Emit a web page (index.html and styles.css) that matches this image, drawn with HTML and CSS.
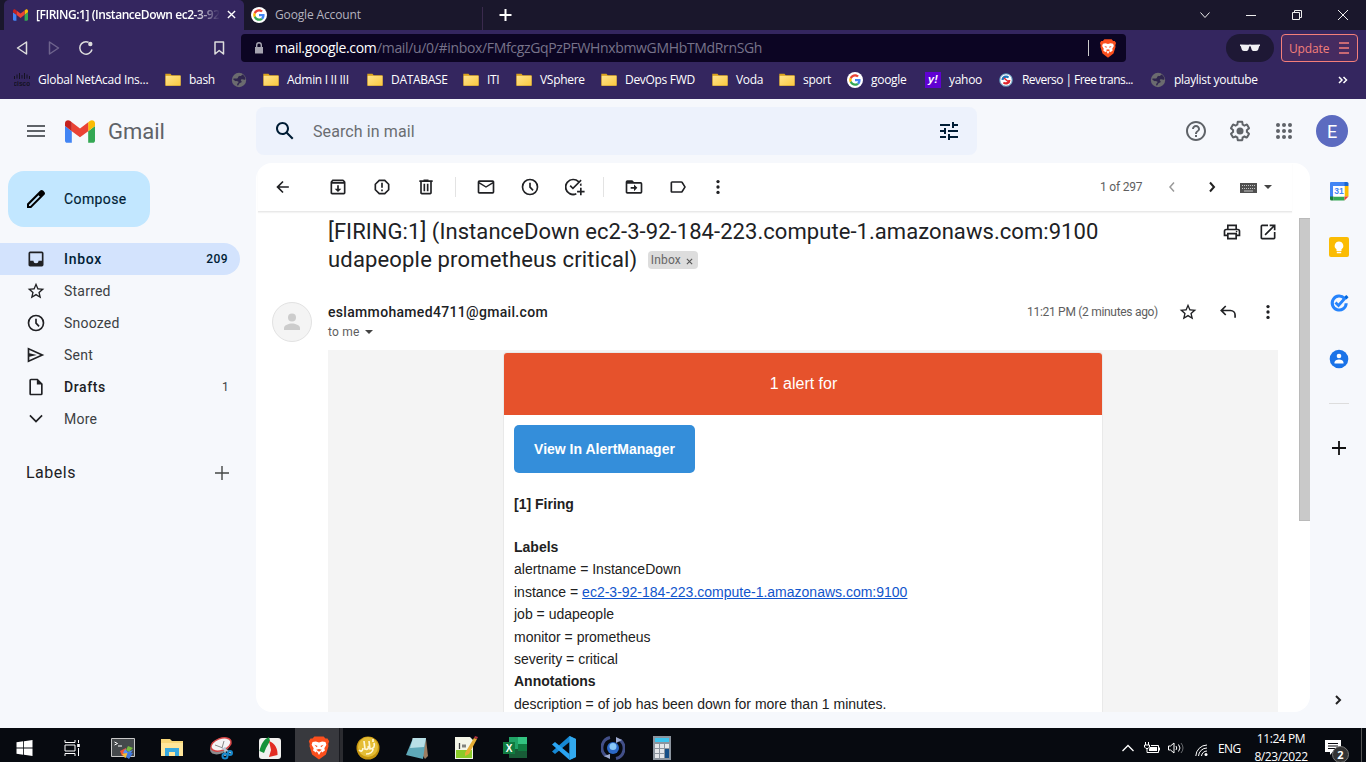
FILE: index.html
```html
<!DOCTYPE html>
<html lang="en">
<head>
<meta charset="utf-8">
<title>Gmail</title>
<link rel="stylesheet" href="styles.css">
</head>
<body>
<svg class="sprite" aria-hidden="true">
  <symbol id="gmail" viewBox="52 42 88 66"><path fill="#4285f4" d="M58 108h14V74L52 59v43c0 3.320 2.690 6 6 6"/><path fill="#34a853" d="M120 108h14c3.320 0 6-2.690 6-6V59l-20 15"/><path fill="#fbbc04" d="M120 48v26l20-15v-8c0-7.420-8.470-11.650-14.400-7.200"/><path fill="#ea4335" d="M72 74V48l24 18 24-18v26L96 92"/><path fill="#c5221f" d="M52 51v8l20 15V48l-5.600-4.200c-5.940-4.450-14.400-.22-14.400 7.200"/></symbol>
  <symbol id="google" viewBox="-9 -9 66 66"><circle cx="24" cy="24" r="33" fill="#fff"/><path fill="#ea4335" d="M24 9.5c3.54 0 6.71 1.22 9.21 3.6l6.85-6.85C35.9 2.38 30.47 0 24 0 14.62 0 6.51 5.38 2.56 13.22l7.98 6.19C12.43 13.72 17.74 9.5 24 9.5z"/><path fill="#4285f4" d="M46.98 24.55c0-1.57-.15-3.09-.38-4.55H24v9.02h12.94c-.58 2.96-2.26 5.48-4.78 7.18l7.73 6c4.51-4.18 7.09-10.36 7.09-17.65z"/><path fill="#fbbc05" d="M10.53 28.59c-.48-1.45-.76-2.99-.76-4.59s.27-3.14.76-4.59l-7.98-6.19C.92 16.46 0 20.12 0 24c0 3.88.92 7.54 2.56 10.78l7.97-6.19z"/><path fill="#34a853" d="M24 48c6.48 0 11.93-2.13 15.89-5.81l-7.73-6c-2.15 1.45-4.92 2.3-8.16 2.3-6.26 0-11.57-4.22-13.47-9.91l-7.98 6.19C6.51 42.62 14.62 48 24 48z"/></symbol>
  <linearGradient id="fg" x2="1" y2="1"><stop offset="0" stop-color="#ffe38c"/><stop offset="1" stop-color="#fbc93f"/></linearGradient>
  <symbol id="folder" viewBox="0 0 16 16"><path d="M.3 1.800h5.200l1.200 1.400h8.800v10.600H.3z" fill="#d9a21c"/><path d="M.7 3.800h14.900v9.800H.7z" fill="url(#fg)"/></symbol>
  <symbol id="globe" viewBox="0 0 16 16"><circle cx="8" cy="8" r="7.200" fill="#6b6b6f"/><path d="M1.800 7C4 6 5.200 6.800 6.500 6.300c.8-.5.300-1.500 1.300-2 1.200-.5 1.700.2 2.700-.8L11.500 2.500C13.500 3.500 14.500 5.500 14.400 7.500c-1.400.9-2.400-.6-4.200 0-.9.5-.2 1.200.3 1.700.6.8-.2 1.300-1 1.600-1.200.4-1.500 1.200-2 2.200-.7 1-1.500.6-1.400-.4.1-1.400 1.600-1.700 1.500-2.600-.2-1-2.200-.6-3.400-1.100C3.200 8.500 2.800 7.600 1.800 7z" fill="#30264f"/></symbol>
  <symbol id="brave" viewBox="0 0 24 26"><path d="M7 .5h10l2 2.300 2.200-.2 1.800 3-1 3 .3 2.400-2.800 9L12 25.500 4.500 20l-2.800-9L2 8.600l-1-3 1.800-3 2.200.2z" fill="#fb4f1d"/><path d="M5 6.500l3.500-.6L12 7l3.500-1.100 3.500.6 1 3-2.200 3.800.6 2.400-3 2.300-1-1.500L12 20.500l-2.400-4-1 1.500-3-2.300.6-2.400L4 9.500z" fill="#fff"/><path d="M7 9.500l3.500 1.200-1 1.600zM17 9.500l-3.500 1.200 1 1.600zM9 15l3-1 3 1-3 2z" fill="#fb4f1d"/></symbol>
  <symbol id="star" viewBox="0 0 24 24"><path d="M22 9.240l-7.190-.62L12 2 9.190 8.630 2 9.240l5.460 4.730L5.820 21 12 17.270 18.180 21l-1.630-7.030L22 9.240zM12 15.400l-3.760 2.270 1-4.280-3.320-2.880 4.380-.38L12 6.100l1.710 4.040 4.380.38-3.320 2.880 1 4.280L12 15.400z"/></symbol>
  <symbol id="clock" viewBox="0 0 24 24"><path d="M12 2a10 10 0 1 0 0 20 10 10 0 0 0 0-20zm0 18a8 8 0 1 1 0-16 8 8 0 0 1 0 16zM13 7h-2v5.500l4 4.200 1.400-1.300-3.400-3.700z"/></symbol>
  <symbol id="dots" viewBox="0 0 24 24"><circle cx="12" cy="5.500" r="2"/><circle cx="12" cy="12" r="2"/><circle cx="12" cy="18.500" r="2"/></symbol>
</svg>

<header class="browser">
  <div class="tabs">
    <div class="tab active"><svg class="i14"><use href="#gmail"/></svg><span class="tab-title">[FIRING:1] (InstanceDown ec2-3-92</span><svg class="close" viewBox="0 0 10 10"><path d="M1 1l8 8M9 1L1 9"/></svg></div>
    <div class="tab"><svg class="i16"><use href="#google"/></svg><span>Google Account</span></div>
    <svg class="newtab" viewBox="0 0 12 12"><path d="M6 0v12M0 6h12"/></svg>
    <div class="win">
      <svg viewBox="0 0 12 12"><path d="M1.500 3.500L6 8.500l4.500-5"/></svg>
      <svg viewBox="0 0 12 12"><path d="M1 6.500h10"/></svg>
      <svg viewBox="0 0 12 12"><path d="M1.500 3.500h7v7h-7zM3.500 3.500v-2h7v7h-2"/></svg>
      <svg viewBox="0 0 12 12"><path d="M1 1l10 10M11 1L1 11"/></svg>
    </div>
  </div>
  <div class="toolbar">
    <svg class="tb" viewBox="0 0 16 16"><path d="M12.500 2v12l-9-6z"/></svg>
    <svg class="tb dim" viewBox="0 0 16 16"><path d="M3.500 2v12l9-6z"/></svg>
    <svg class="tb reload" viewBox="0 0 16 16"><path d="M14 9.500A6.200 6.200 0 1 1 10.500 2.300"/><circle cx="12.300" cy="4" r="2.200" fill="#ddd" stroke="none"/></svg>
    <svg class="tb mark" viewBox="0 0 16 16"><path d="M4 2h8.500v12L8.200 10.500 4 14z"/></svg>
    <div class="url">
      <svg class="lock" viewBox="0 0 10 12"><path d="M1 5h8v6.500H1z" fill="#a6a4b0"/><path d="M2.700 5V3a2.300 2.300 0 0 1 4.600 0v2" fill="none" stroke="#a6a4b0" stroke-width="1.400"/></svg>
      <span class="host">mail.google.com</span><span class="path">/mail/u/0/#inbox/FMfcgzGqPzPFWHnxbmwGMHbTMdRrnSGh</span>
      <i class="rule"></i><svg class="lion"><use href="#brave"/></svg>
    </div>
    <div class="private"><svg viewBox="0 0 22 10"><path d="M1 1.500l8.500.3c1-.4 2-.4 3 0L21 1.500v1.300l-.8.500-.9 3c-.4 1.200-1 1.700-2.200 1.700h-2.300c-1.200 0-1.900-.6-2.300-1.800l-.7-2.400c-.3-.6-1.300-.6-1.600 0l-.7 2.400C9.100 7.400 8.400 8 7.200 8H4.900C3.700 8 3.100 7.500 2.700 6.300l-.9-3L1 2.800z" fill="#f1f0f4"/></svg></div>
    <div class="update"><span>Update</span><svg viewBox="0 0 10 12"><path d="M0 1h10M0 6h10M0 11h10" stroke="#f47f7a" stroke-width="1.500"/></svg></div>
  </div>
  <nav class="bookmarks">
    <span class="bm"><svg class="i16" viewBox="0 0 16 16"><path d="M.5 4v3M3 2.500v4M5.500 1v6M8 3v3.500M10.500 1v6M13 2.500v4M15.500 4v3" stroke="#151222"/><text x="-.5" y="13.500" class="cisco">cisco</text></svg><b class="w-net">Global NetAcad Ins...</b></span>
    <span class="bm"><svg class="i16"><use href="#folder"/></svg><b>bash</b></span>
    <span class="bm"><svg class="i16"><use href="#globe"/></svg></span>
    <span class="bm"><svg class="i16"><use href="#folder"/></svg><b>Admin I II III</b></span>
    <span class="bm"><svg class="i16"><use href="#folder"/></svg><b>DATABASE</b></span>
    <span class="bm"><svg class="i16"><use href="#folder"/></svg><b>ITI</b></span>
    <span class="bm"><svg class="i16"><use href="#folder"/></svg><b>VSphere</b></span>
    <span class="bm"><svg class="i16"><use href="#folder"/></svg><b>DevOps FWD</b></span>
    <span class="bm"><svg class="i16"><use href="#folder"/></svg><b>Voda</b></span>
    <span class="bm"><svg class="i16"><use href="#folder"/></svg><b>sport</b></span>
    <span class="bm"><svg class="i16"><use href="#google"/></svg><b>google</b></span>
    <span class="bm"><i class="yahoo">y!</i><b>yahoo</b></span>
    <span class="bm"><svg class="i16" viewBox="0 0 16 16"><circle cx="7" cy="8" r="6.600" fill="#fff"/><path d="M2.500 8a4.500 4.500 0 0 1 7.700-3.200L9 6.200A2.800 2.800 0 0 0 4.600 8z" fill="#1b75bb"/><path d="M11.500 8a4.500 4.500 0 0 1-7.700 3.200L5 9.800A2.800 2.800 0 0 0 9.400 8z" fill="#e0262d"/><path d="M5 6l4 3.500" stroke="#e0262d" stroke-width="1.500"/><circle cx="7" cy="8" r="6.300" fill="none" stroke="#2a6f9f" stroke-width=".9"/></svg><b class="w-rev">Reverso | Free trans...</b></span>
    <span class="bm"><svg class="i16"><use href="#globe"/></svg><b>playlist youtube</b></span>
    <svg class="more" viewBox="0 0 10 8"><path d="M1 1l3 3-3 3M5.500 1l3 3-3 3"/></svg>
  </nav>
</header>

<div class="app">
  <header class="top">
    <svg class="menu" viewBox="3 6 18 12"><path d="M3 18h18v-2H3v2zm0-5h18v-2H3v2zm0-7v2h18V6H3z"/></svg>
    <svg class="logo"><use href="#gmail"/></svg>
    <span class="brand">Gmail</span>
    <div class="search">
      <svg class="i24" viewBox="0 0 24 24"><path d="M20.490 19l-5.730-5.730C15.530 12.200 16 10.910 16 9.500 16 5.910 13.090 3 9.500 3S3 5.910 3 9.500 5.910 16 9.500 16c1.410 0 2.700-.47 3.770-1.240L19 20.490 20.490 19zM5 9.500C5 7.010 7.010 5 9.500 5S14 7.010 14 9.500 11.990 14 9.500 14 5 11.990 5 9.500z"/></svg>
      <span>Search in mail</span>
      <svg class="i24" viewBox="0 0 24 24"><path d="M3 17v2h6v-2H3zM3 5v2h10V5H3zm10 16v-2h8v-2h-8v-2h-2v6h2zM7 9v2H3v2h4v2h2V9H7zm14 4v-2H11v2h10zm-6-4h2V7h4V5h-4V3h-2v6z"/></svg>
    </div>
    <div class="tools">
      <svg class="i24" viewBox="0 0 24 24"><path d="M11 18h2v-2h-2v2zm1-16C6.480 2 2 6.480 2 12s4.480 10 10 10 10-4.480 10-10S17.520 2 12 2zm0 18c-4.410 0-8-3.590-8-8s3.590-8 8-8 8 3.590 8 8-3.590 8-8 8zm0-14c-2.210 0-4 1.790-4 4h2c0-1.100.9-2 2-2s2 .9 2 2c0 2-3 1.750-3 5h2c0-2.250 3-2.500 3-5 0-2.210-1.790-4-4-4z"/></svg>
      <svg class="i24" viewBox="0 0 24 24"><path d="M13.850 22.250h-3.700c-.74 0-1.360-.54-1.450-1.270l-.27-1.890c-.27-.14-.53-.29-.79-.46l-1.800.72c-.7.26-1.470-.03-1.810-.65L2.200 15.530c-.35-.66-.2-1.440.36-1.880l1.530-1.190c-.01-.15-.02-.3-.02-.46 0-.15.010-.31.020-.46l-1.520-1.190c-.59-.45-.74-1.260-.37-1.880l1.850-3.190c.34-.62 1.110-.9 1.790-.63l1.810.73c.26-.17.520-.32.780-.46l.27-1.910c.09-.7.710-1.250 1.440-1.250h3.700c.74 0 1.360.54 1.450 1.270l.27 1.890c.27.14.53.29.79.46l1.800-.72c.71-.26 1.480.03 1.820.65l1.840 3.180c.36.66.2 1.440-.36 1.880l-1.520 1.190c.01.15.02.3.02.46s-.01.31-.02.46l1.520 1.190c.56.45.72 1.230.37 1.860l-1.860 3.220c-.34.62-1.110.9-1.800.63l-1.800-.72c-.26.17-.52.32-.78.46l-.27 1.910c-.1.68-.72 1.220-1.460 1.220zm-3.230-2h2.760l.37-2.550.53-.22c.44-.18.88-.44 1.340-.78l.45-.34 2.380.96 1.380-2.400-2.030-1.580.07-.56c.03-.26.06-.51.06-.78s-.03-.53-.06-.78l-.07-.56 2.030-1.580-1.390-2.400-2.390.96-.45-.35c-.42-.32-.87-.58-1.330-.77l-.52-.22-.37-2.550h-2.760l-.37 2.550-.53.21c-.44.19-.88.44-1.340.79l-.45.33-2.380-.95-1.390 2.390 2.030 1.580-.07.56a7 7 0 0 0-.06.79c0 .26.02.53.06.78l.07.56-2.030 1.580 1.380 2.400 2.390-.96.45.35c.43.33.86.58 1.330.77l.53.22z"/><circle cx="12" cy="12" r="3.500"/></svg>
      <svg class="i24" viewBox="0 0 24 24"><g id="r"><circle cx="6" cy="6" r="2"/><circle cx="12" cy="6" r="2"/><circle cx="18" cy="6" r="2"/></g><use href="#r" y="6"/><use href="#r" y="12"/></svg>
      <span class="me">E</span>
    </div>
  </header>

  <aside class="side">
    <div class="compose"><svg class="i24" viewBox="0 0 24 24"><path d="M20.410 4.940l-1.350-1.350c-.78-.78-2.050-.78-2.830 0L3 16.820V21h4.180L20.410 7.770c.79-.78.79-2.050 0-2.830zM6.350 19H5v-1.350l9.500-9.500 1.350 1.350z"/></svg><span>Compose</span></div>
    <ul class="nav">
      <li class="on"><svg viewBox="0 0 24 24"><path d="M19 3H5a2 2 0 0 0-2 2v14c0 1.100.9 2 2 2h14a2 2 0 0 0 2-2V5a2 2 0 0 0-2-2zm0 11h-4a3 3 0 0 1-6 0H5V5h14z"/></svg><span>Inbox</span><em>209</em></li>
      <li><svg><use href="#star"/></svg><span>Starred</span></li>
      <li><svg><use href="#clock"/></svg><span>Snoozed</span></li>
      <li><svg viewBox="0 0 24 24"><path d="M2 3v18l20-9L2 3zm2 11l9-2-9-2V6.090L17.130 12 4 17.910V14z"/></svg><span>Sent</span></li>
      <li class="bold"><svg viewBox="0 0 24 24"><path d="M14 2H6a2 2 0 0 0-2 2v16c0 1.100.9 2 2 2h12a2 2 0 0 0 2-2V8l-6-6zM6 20V4h7v5h5v11H6z"/></svg><span>Drafts</span><em>1</em></li>
      <li><svg viewBox="0 0 24 24"><path d="M12 16.400l-8-8L5.400 7l6.600 6.600L18.600 7 20 8.400z"/></svg><span>More</span></li>
    </ul>
    <div class="labels"><span>Labels</span><svg viewBox="0 0 14 14"><path d="M7 0v14M0 7h14" stroke="#444746" stroke-width="1.400"/></svg></div>
  </aside>

  <main class="mail">
    <div class="actions">
      <span class="btn back"><svg viewBox="0 0 24 24"><path d="M19 11H7.800l4.900-4.900L11.300 4.700 4 12l7.300 7.300 1.400-1.400L7.800 13H19z"/></svg></span>
      <span class="btn"><svg viewBox="0 0 24 24"><path d="M20.500 5.200l-1.400-1.700A1.500 1.500 0 0 0 18 3H6c-.5 0-.9.200-1.200.600L3.500 5.200C3.200 5.600 3 6 3 6.500V19c0 1.100.9 2 2 2h14a2 2 0 0 0 2-2V6.500c0-.5-.2-.9-.5-1.300zM6.200 5h11.600l.8 1H5.400zM5 19V8h14v11zm8-9h-2v4H8l4 4 4-4h-3z"/></svg></span>
      <span class="btn"><svg viewBox="0 0 24 24"><path d="M15.700 3H8.300L3 8.300v7.400L8.300 21h7.400l5.300-5.300V8.300zM19 14.900L14.900 19H9.100L5 14.900V9.100L9.100 5h5.800L19 9.100zM11 7h2v6h-2zM11 15h2v2h-2z"/></svg></span>
      <span class="btn"><svg viewBox="0 0 24 24"><path d="M15 4V3H9v1H4v2h1v13c0 1.100.9 2 2 2h10a2 2 0 0 0 2-2V6h1V4zm2 15H7V6h10zM9 8h2v9H9zm4 0h2v9h-2z"/></svg></span>
      <i class="sep"></i>
      <span class="btn"><svg viewBox="0 0 24 24"><path d="M22 6c0-1.100-.9-2-2-2H4a2 2 0 0 0-2 2v12c0 1.100.9 2 2 2h16a2 2 0 0 0 2-2zm-2 0l-8 5-8-5zm0 12H4V8l8 5 8-5z"/></svg></span>
      <span class="btn"><svg><use href="#clock"/></svg></span>
      <span class="btn task"><svg viewBox="0 0 24 24"><path d="M10 2a10 10 0 1 0 4 19l-.8-1.800A8 8 0 1 1 15.500 6.200L9.500 12.200 6.900 9.600 5.500 11l4 4L20 4.500l-1.400-1.400-1.700 1.700A10 10 0 0 0 10 2zM20 10.500a10 10 0 0 0-.6-3.200l-1.600 1.600c.1.500.2 1.100.2 1.600zM18 13h2v3.500h3.500v2H20V22h-2v-3.500h-3.500v-2H18z"/></svg></span>
      <i class="sep"></i>
      <span class="btn"><svg viewBox="0 0 24 24"><path d="M20 6h-8l-2-2H4a2 2 0 0 0-2 2v12c0 1.100.9 2 2 2h16a2 2 0 0 0 2-2V8a2 2 0 0 0-2-2zm0 12H4V8h16zm-8-1l4-4-4-4v3H8v2h4z"/></svg></span>
      <span class="btn"><svg viewBox="0 0 24 24"><path d="M17.600 5.800C17.300 5.300 16.700 5 16 5H5a2 2 0 0 0-2 2v10c0 1.100.9 2 2 2h11c.7 0 1.300-.3 1.600-.8L21.500 12zM16 17H5V7h11l3.300 5z"/></svg></span>
      <span class="btn last"><svg><use href="#dots"/></svg></span>
      <span class="count">1 of 297</span>
      <svg class="prev" viewBox="0 0 8 12"><path d="M6 1.500L2 6l4 4.500"/></svg>
      <svg class="next" viewBox="0 0 8 12"><path d="M2 1.500L6 6l-4 4.500"/></svg>
      <svg class="kbd" viewBox="0 0 17 11"><path d="M0 0h17v10H0z" fill="#505050"/><path d="M2 2.500h13M2 5.500h13" stroke="#c4c4c4" stroke-dasharray="1 1"/><path d="M4 8h9" stroke="#c4c4c4"/></svg>
      <i class="caret"></i>
    </div>
    <div class="view">
      <div class="subject">
        <h1><span class="l1">[FIRING:1] (InstanceDown ec2-3-92-184-223.compute-1.amazonaws.com:9100</span><br><span class="l2">udapeople prometheus critical)</span> <span class="chip">Inbox <svg viewBox="0 0 8 8"><path d="M1 1l6 6M7 1L1 7"/></svg></span></h1>
        <svg viewBox="0 0 24 24"><path d="M19 8h-1V3H6v5H5a3 3 0 0 0-3 3v6h4v4h12v-4h4v-6a3 3 0 0 0-3-3zM8 5h8v3H8zm8 14H8v-4h8zm4-4h-2v-2H6v2H4v-4c0-.6.4-1 1-1h14c.6 0 1 .4 1 1z"/><circle cx="17.500" cy="11.500" r="1"/></svg>
        <svg viewBox="0 0 24 24"><path d="M19 19H5V5h7V3H5a2 2 0 0 0-2 2v14c0 1.100.9 2 2 2h14a2 2 0 0 0 2-2v-7h-2zM14 3v2h3.600l-9.800 9.800 1.400 1.400L19 6.400V10h2V3z"/></svg>
      </div>
      <div class="from">
        <span class="avatar"><svg viewBox="0 0 18 18"><circle cx="9" cy="4.500" r="4"/><path d="M1 17v-2c0-3 5-4.500 8-4.500s8 1.500 8 4.500v2z"/></svg></span>
        <div class="who"><strong>eslammohamed4711@gmail.com</strong><span>to me <i class="caret"></i></span></div>
        <div class="meta"><span>11:21 PM (2 minutes ago)</span><svg><use href="#star"/></svg><svg viewBox="0 0 24 24"><path d="M10 5.500L8.600 4.100 2.500 10.200l6.100 6.100L10 14.900 6.300 11.200H15a4.500 4.500 0 0 1 4.500 4.500V19h2v-3.300A6.500 6.500 0 0 0 15 9.200H6.300z"/></svg><svg><use href="#dots"/></svg></div>
      </div>
      <div class="body">
        <div class="card">
          <div class="alert">1 alert for</div>
          <div class="inner">
            <span class="cta">View In AlertManager</span>
            <p class="fire"><b>[1] Firing</b></p>
            <p class="facts"><b>Labels</b><br>alertname = InstanceDown<br>instance = <u>ec2-3-92-184-223.compute-1.amazonaws.com:9100</u><br>job = udapeople<br>monitor = prometheus<br>severity = critical<br><b>Annotations</b><br>description = of job has been down for more than 1 minutes.</p>
          </div>
        </div>
      </div>
      <i class="thumb"></i>
    </div>
  </main>

  <aside class="addons">
    <svg viewBox="0 0 20 20"><path d="M2 1h14v4H4v11H1V2a1 1 0 0 1 1-1z" fill="#4285f4"/><path d="M15.500 1H18a1.500 1.500 0 0 1 1.500 1.500V5h-4z" fill="#1967d2"/><path d="M15.500 5h4v10.500h-4z" fill="#fbbc04"/><path d="M4.500 15.500h11v4h-11z" fill="#34a853"/><path d="M1 15.500h3.500v4h-2A1.500 1.500 0 0 1 1 18z" fill="#188038"/><path d="M15.500 15.500h4l-4 4z" fill="#ea4335"/><path d="M4.500 5h11v10.500h-11z" fill="#fff"/><text x="10" y="13.300" class="day">31</text></svg>
    <svg viewBox="0 0 20 20"><rect width="20" height="20" rx="2" fill="#fbbc04"/><path d="M10 4.500a4.300 4.300 0 0 0-2.500 7.800V14h5v-1.700A4.300 4.300 0 0 0 10 4.500zM7.800 14.700h4.400v1.500H7.800z" fill="#fff"/></svg>
    <svg viewBox="0 0 20 20"><path d="M15.500 5.500a7 7 0 1 0 1.700 4.700" fill="none" stroke="#2684fc" stroke-width="3"/><path d="M6.500 9.500l3 3 8-9" fill="none" stroke="#2684fc" stroke-width="2.800"/><path d="M15.500 4l2-2 2 2.200-2 2.300z" fill="#0066da"/></svg>
    <svg viewBox="0 0 20 20"><circle cx="10" cy="10" r="9.300" fill="#1a73e8"/><circle cx="10" cy="7" r="2.300" fill="#fff"/><path d="M5.500 14.500v-1c0-4 9-4 9 0v1z" fill="#fff"/></svg>
    <i class="line"></i>
    <svg class="plus" viewBox="0 0 14 14"><path d="M7 0v14M0 7h14" stroke="#111" stroke-width="1.800"/></svg>
    <svg class="expand" viewBox="0 0 8 12"><path d="M2 2l4 4-4 4"/></svg>
  </aside>
</div>

<footer class="taskbar">
  <span><svg class="t16" viewBox="0 0 16 16"><path d="M0 2.300l6.700-1v6.300H0zM7.500 1.200L16 0v7.600H7.500zM0 8.400h6.700v6.300l-6.700-1zM7.500 8.400H16V16l-8.500-1.200z" fill="#fff"/></svg></span>
  <span><svg class="t16" viewBox="0 0 16 16"><path d="M.5 0v2.500h10V0M.5 16v-2.500h10V16M.5 5h10v6H.5zM14 0v3M14 8v8" fill="none" stroke="#fff"/><path d="M12.700 4h2.600v3h-2.600z" fill="#fff"/></svg></span>
  <span><svg viewBox="0 0 24 24"><path d="M.5 2.500h23v18H.5z" fill="#45494c" stroke="#c8c8c8"/><path d="M3.500 6l3 1.500-3 1.500M7 10h4" fill="none" stroke="#fff"/><path d="M9 15l6-3v5l-4 3z" fill="#ef5534"/><path d="M17 10l5 2-4 4-3-2z" fill="#76b83f"/><path d="M14 13l3 3 5-2-4 5-6-2z" fill="#5791f4"/><path d="M11 18l5-1 2 3-4 2z" fill="#f7bd37"/><path d="M17 16l5 1-4 6-3-2z" fill="#3e77de"/></svg></span>
  <span><svg viewBox="0 0 24 24"><path d="M1 3h9l2 2h11v15H1z" fill="#f8d778"/><path d="M1 7h22v13H1z" fill="#ffe69a"/><path d="M5 12h14v8h-4v-4H9v4H5z" fill="#37a9e0"/></svg></span>
  <span><svg viewBox="0 0 24 24"><ellipse cx="11" cy="11" rx="10.500" ry="6.500" fill="#8c8c8f" transform="rotate(-25 11 11)"/><ellipse cx="12" cy="8.500" rx="10.500" ry="6" fill="#f4f4f5" stroke="#d64545" stroke-width="1.500" transform="rotate(-20 12 8.500)"/><path d="M15 5l-2 7M6 9l8 3" stroke="#888"/><path d="M13 12l9 5M16 11v9" stroke="#b8c8d5" stroke-width="1.500"/><circle cx="16" cy="20" r="2.500" fill="none" stroke="#1688cc" stroke-width="2"/><circle cx="21" cy="17" r="2" fill="none" stroke="#1688cc" stroke-width="2"/></svg></span>
  <span><svg viewBox="0 0 24 24"><rect x="1" y="2" width="22" height="21" rx="3" fill="#f1f1ef"/><path d="M1.500 15C3 8 6 3 11 1l1 4-4 7-2 5z" fill="#17923a"/><path d="M11 5c6 2 9 8 8.500 14L11 21l2-7z" fill="#e22c22"/></svg></span>
  <span class="run"><svg viewBox="0 0 24 24"><use href="#brave" width="24" height="24"/></svg></span>
  <span><svg viewBox="0 0 24 24"><circle cx="12" cy="12" r="11.500" fill="#c7960f"/><circle cx="12" cy="11" r="10" fill="#e5bd35"/><path d="M3 14c2 2 4 1 4-2M8 5l1 8c3 1 4-1 3-3M13 5l1 8c4 0 5-3 4-6M10 18c4 0 7-2 7-5M17 3v3" fill="none" stroke="#fff7d5" stroke-width="1.700"/></svg></span>
  <span><svg viewBox="0 0 24 24"><path d="M7 2l14 1 2 17-3 3z" fill="#9c7c60"/><path d="M8 2h13l-3 21-17-4z" fill="#5fa9b9"/><path d="M8 2h13l-2 9-14 1z" fill="#b9e0e7"/></svg></span>
  <span><svg viewBox="0 0 24 24"><path d="M1 1h15l3 3v19H1z" fill="#f4f6e8"/><path d="M2 14h16v8H2z" fill="#8acb28"/><path d="M5.500 7v6M9 8.500v3M11 8.500v3" stroke="#444" stroke-width="1.300"/><path d="M11 17L20 2l3 1-8 15-4 2z" fill="#e6ad34"/><path d="M20 2l1-2 3 1-1 2z" fill="#af3541"/></svg></span>
  <span><svg viewBox="0 0 24 24"><path d="M6 1h18v21H6z" fill="#21a366"/><path d="M15 1h9v7h-9z" fill="#33c481"/><path d="M6 13h18v9H6z" fill="#185c37"/><path d="M15 8h9v7h-9z" fill="#107c41"/><path d="M0 6h12v12H0z" fill="#107c41"/><text x="6" y="15.500" class="xl">X</text></svg></span>
  <span><svg viewBox="0 0 24 24"><path d="M17.500 0L24 3v18l-6.500 3V6L3 18l-3-2.500z" fill="#1688d4"/><path d="M0 8.500L3 6l14.500 12v6z" fill="#2aa4f2"/><path d="M17.500 0L24 3v18l-6.500 3z" fill="#32a9ee"/></svg></span>
  <span><svg viewBox="0 0 24 24"><circle cx="12" cy="12" r="6" fill="#2b68c6"/><circle cx="12" cy="10.500" r="3.500" fill="#88c8f7"/><path d="M9 1.500A10.500 10.500 0 0 0 5 20M15 22.500A10.500 10.500 0 0 0 19 4" fill="none" stroke="#424f88" stroke-width="3"/><path d="M3 20l6-2v5zM21 4l-6-3v6z" fill="#9eabd0"/></svg></span>
  <span><svg viewBox="0 0 24 24"><path d="M3 0h18v24H3z" fill="#8b949e"/><path d="M5 2h14v4H5z" fill="#3cc4ef"/><path d="M5 8h4v4H5zm5 0h4v4h-4zm5 0h4v4h-4zM5 13h4v4H5zm5 0h4v4h-4zM5 18h4v4H5zm5 0h4v4h-4z" fill="#e4e7ea"/><path d="M15 13h4v9h-4z" fill="#174f86"/></svg></span>
  <div class="tray">
    <svg class="up" viewBox="0 0 12 8"><path d="M.5 7L6 1.500 11.500 7"/></svg>
    <svg class="bat" viewBox="0 0 16 12"><path d="M1.500 0v3M4.500 0v3M.5 3h5v2l-1.500 1.500H2L.5 5zM3 6.500v4h11.500v-7H7"/><path d="M6 5h7v4H5V7z" fill="#fff" stroke="none"/><path d="M15.500 5.500v3"/></svg>
    <svg class="vol" viewBox="0 0 16 12"><path d="M.5 4h2L6 1v10L2.500 8h-2zM8 4q1.500 2 0 4M10.500 2.500q3 3.500 0 7"/><path d="M13 1q4 5 0 10" opacity=".4"/></svg>
    <svg class="wifi" viewBox="0 0 13 12"><path d="M.8 12A11.500 11.500 0 0 1 12 1M3.500 12A8.500 8.500 0 0 1 12 4M6.500 12A5.500 5.500 0 0 1 12 7"/><circle cx="11" cy="10.500" r="1.500" fill="#fff" stroke="none"/></svg>
    <span class="lang">ENG</span>
    <div class="time"><span>11:24 PM</span><span>8/23/2022</span></div>
    <div class="note"><svg viewBox="0 0 16 16"><path d="M0 0h16v12H7.500L5 15v-3H0z" fill="#fff"/><path d="M3 3.500h10M3 6h10M3 8.500h7" stroke="#08090f"/></svg><b>2</b></div>
    <i class="desk"></i>
  </div>
</footer>
</body>
</html>
```
FILE: styles.css
```css
* { box-sizing: border-box; }
body { margin: 0; width: 1366px; height: 762px; overflow: hidden; background: #f6f8fc; font-family: Roboto, "Liberation Sans", sans-serif; color: #202124; display: flex; flex-direction: column; }
svg { display: block; flex: none; }
i, em { font-style: normal; }
.sprite { position: absolute; width: 0; height: 0; }
.i14 { width: 14px; height: 14px; }
.i16 { width: 16px; height: 16px; }
.i24 { width: 24px; height: 24px; }

/* browser chrome */
.browser { height: 99px; flex: none; background: #34265f; color: #fff; font: 12px "Open Sans", "Noto Sans", sans-serif; }
.tabs { height: 30px; background: #1a172c; display: flex; align-items: center; padding-left: 4px; }
.tab { height: 30px; display: flex; align-items: center; gap: 8px; padding-left: 7px; width: 239px; color: #b5b3bf; letter-spacing: -.15px; }
.tab.active { width: 240px; background: #34265f; color: #fff; border-radius: 5px 5px 0 0; padding: 0 8px 1px 9px; font-weight: 600; letter-spacing: -.45px; }
.tab .i14 { width: 15px; margin-right: -2px; }
.tab-title { width: 183px; margin-left: 2px; overflow: hidden; white-space: nowrap; -webkit-mask-image: linear-gradient(90deg, #000 158px, transparent 184px); mask-image: linear-gradient(90deg, #000 158px, transparent 184px); }
.close { width: 9px; height: 9px; margin-left: auto; fill: none; stroke: #fff; stroke-width: 1.5; }
.newtab { width: 27px; height: 12px; margin-left: 9px; stroke: #fff; stroke-width: 2; }
.tab:nth-child(2) { box-shadow: inset -1px 0 #3a2a4d; height: 23px; margin-top: 7px; padding-bottom: 8px; }
.win { display: flex; gap: 34px; margin-left: auto; padding: 0 17px 1px 0; }
.win svg { width: 12px; height: 12px; fill: none; stroke: #eee; }
.toolbar { height: 36px; display: flex; align-items: center; }
.tb { width: 16px; height: 16px; fill: none; stroke: #ddd; stroke-width: 1.5; stroke-linejoin: round; margin-left: 16px; }
.tb:first-child { margin-left: 14px; }
.tb.dim { stroke: #6e638d; }
.tb.mark { margin-left: 117px; }
.url { margin-left: 14px; width: 885px; height: 28px; background: #0c0523; border-radius: 4px; display: flex; align-items: center; font-size: 14px; }
.url span { position: relative; top: -1px; }
.lock { width: 10px; height: 12px; margin: 0 11px 0 13px; }
.host { letter-spacing: -.36px; width: 102px; white-space: nowrap; }
.path { color: #77738a; letter-spacing: -.34px; }
.rule { margin-left: auto; width: 1px; height: 16px; background: #ccc; }
.lion { width: 18px; height: 19px; margin: 0 9px 0 10px; }
.private { width: 48px; height: 28px; border-radius: 14px; background: #1e1835; margin-left: 100px; display: grid; place-items: center; }
.private svg { width: 22px; height: 10px; }
.update { margin-left: 7px; width: 77px; height: 28px; border: 1px solid #f47f7a; background: #462b60; color: #f47f7a; border-radius: 4px; display: flex; align-items: center; justify-content: space-between; padding: 0 8px 0 7px; letter-spacing: -.15px; }
.update svg { width: 10px; height: 12px; }
.bookmarks { height: 28px; display: grid; align-items: center; grid-template-columns: 151px 66px 32px 104px 96px 53px 85px 111px 67px 68px 78px 74px 151px 188px auto; padding-left: 14px; }
.bm { display: flex; align-items: center; gap: 8px; white-space: nowrap; letter-spacing: -.3px; }
.bm b { font-weight: 400; margin-top: -1px; }
.w-net { letter-spacing: -.25px; }
.bm .w-rev { letter-spacing: -.55px; margin-left: -1px; }
.cisco { font: bold 6.5px "Liberation Sans"; fill: #151222; letter-spacing: 0; }
.yahoo { width: 16px; height: 16px; background: #6001d2; font: italic bold 11px/14px "Liberation Sans"; text-align: center; letter-spacing: 0; }
.more { width: 10px; height: 8px; fill: none; stroke: #fff; stroke-width: 1.5; }

/* application frame */
.app { height: 629px; flex: none; display: grid; grid-template: 64px 565px / 256px 1054px 56px; }
.top { grid-column: 1 / 4; display: flex; align-items: center; }
.menu { width: 18px; height: 12px; margin-left: 27px; fill: #5f6368; }
.logo { width: 30px; height: 23px; margin-left: 20px; }
.brand { flex: none; width: 161px; padding-left: 13px; color: #5f6368; font-size: 22px; }
.search { width: 721px; height: 48px; background: #edf2fc; border-radius: 8px; display: flex; align-items: center; padding: 0 16px 0 17px; fill: #001d35; }
.search span { flex: 1; padding-left: 16px; color: #6a6d71; font-size: 16px; letter-spacing: .1px; }
.tools { display: flex; align-items: center; margin-left: 207px; gap: 20px; fill: #5f6368; }
.me { width: 32px; height: 32px; border-radius: 50%; background: #5c6bc0; color: #fff; font-size: 18px; display: grid; place-items: center; }

.side { font-size: 14px; }
.compose { margin: 8px 0 16px 8px; width: 142px; height: 56px; border-radius: 16px; background: #c2e7ff; color: #001d35; display: flex; align-items: center; gap: 16px; padding-left: 16px; letter-spacing: .4px; }
.compose span { -webkit-text-stroke: .15px; }
.nav { list-style: none; margin: 0; padding: 0; }
.nav li { height: 32px; width: 240px; display: flex; align-items: center; padding: 0 12px 0 26px; border-radius: 0 16px 16px 0; color: #3c4043; letter-spacing: .22px; }
.nav svg { width: 20px; height: 20px; margin-right: 18px; fill: #202124; }
.nav em { margin-left: auto; font-size: 12px; }
.nav .on { background: #d3e3fd; color: #001d35; font-weight: 500; letter-spacing: .7px; }
.nav .on em { letter-spacing: .4px; }
.nav .bold span { font-weight: 500; color: #202124; letter-spacing: .6px; }
.nav .bold em { margin-right: -1px; }
.labels { margin-top: 17px; height: 40px; display: flex; align-items: center; justify-content: space-between; padding: 0 27px 0 26px; width: 256px; font-size: 16px; letter-spacing: .5px; }
.labels svg { width: 14px; height: 14px; margin-top: 1px; }

/* message pane */
.mail { height: 549px; background: #fff; border-radius: 16px; overflow: hidden; display: flex; flex-direction: column; fill: #202124; }
.actions { height: 49px; margin: 0 18px 0 2px; padding-left: 2px; display: flex; align-items: center; flex: none; border-bottom: 1px solid #e9e9e9; box-shadow: 0 1px 1px #f4f4f4; }
.btn { width: 44px; display: grid; place-items: center; }
.btn svg, .subject > svg, .meta svg { width: 20px; height: 20px; }
.btn.back { margin-right: 12px; padding-left: 1px; }
.btn.task { padding-left: 2px; }
.btn.last { width: 36px; }
.sep { width: 16px; height: 20px; background: linear-gradient(#e3e3e3, #e3e3e3) 7px 0 / 1px 20px no-repeat; }
.count { margin-left: 364px; width: 68px; font-size: 12px; color: #5e5e5e; letter-spacing: -.2px; white-space: nowrap; }
.prev, .next { width: 8px; height: 12px; fill: none; stroke: #9a9a9a; stroke-width: 1.5; }
.next { margin-left: 32px; stroke: #222; stroke-width: 2; }
.kbd { width: 17px; height: 11px; margin: 3px 7px 0 24px; }
.caret { display: inline-block; border: 4px solid transparent; border-top-color: #444; border-bottom: 0; }
.view { position: relative; height: 500px; padding-left: 16px; }
.subject { display: flex; padding: 6px 32px 0 56px; height: 90px; }
.subject h1 { margin: 0; flex: 1; font: 400 22px/28px Roboto; white-space: nowrap; color: #202124; }
.subject > svg { margin: 4px 0 0 16px; }
.l1 { letter-spacing: .06px; }
.l2 { letter-spacing: .17px; }
.chip { display: inline-flex; align-items: center; gap: 5px; vertical-align: 3px; margin-left: 5px; height: 18px; width: 50px; padding: 0 4px 0 3px; border-radius: 4px; background: #ddd; color: #666; font-size: 12px; line-height: 18px; letter-spacing: .15px; }
.chip svg { width: 7px; height: 7px; fill: none; stroke: #555; stroke-width: 1.3; margin-top: 2px; }
.from { height: 48px; display: flex; }
.avatar { width: 40px; height: 40px; border: 1px solid #e2e2e2; border-radius: 50%; background: #f4f4f4; display: grid; place-items: center; fill: #ccc; margin-right: 16px; }
.avatar svg { width: 18px; height: 18px; }
.who { display: flex; flex-direction: column; }
.who strong { font-size: 14px; line-height: 20px; font-weight: 500; letter-spacing: .32px; }
.who span { display: flex; align-items: center; gap: 5px; font-size: 12px; line-height: 20px; color: #5e5e5e; letter-spacing: .2px; }
.meta { margin-left: auto; margin-right: 32px; height: 20px; display: flex; align-items: center; gap: 20px; font-size: 12px; color: #5e5e5e; }
.meta span { letter-spacing: -.3px; }
.body { margin-left: 56px; width: 950px; height: 380px; background: #f4f4f4; padding-top: 2px; font: 14px/22.4px "Liberation Sans", sans-serif; color: #212121; }
.card { width: 600px; height: 400px; margin: 0 auto; background: #fff; border: 1px solid #e9e9e9; border-radius: 3px; }
.alert { height: 62px; background: #e6522c; color: #fff; font-size: 16px; text-align: center; line-height: 62px; border-radius: 3px 3px 0 0; padding-left: 1px; }
.inner { padding: 10px; }
.cta { display: block; width: 181px; height: 48px; line-height: 48px; background: #348eda; color: #fff; font-weight: 700; text-align: center; border-radius: 5px; }
.inner p { margin: 20px 0 0; }
.inner .facts { margin-top: 20.6px; }
.inner u { color: #1155cc; }
.thumb { position: absolute; right: 0; top: 6px; width: 11px; height: 303px; background: #c9c9c9; border: 1px solid #bababa; border-right: 0; }

.addons { display: flex; flex-direction: column; align-items: center; padding: 18px 0 0 2px; height: 565px; }
.addons > svg { width: 20px; height: 20px; margin-bottom: 36px; }
.day { font: bold 8.5px "Liberation Sans"; text-anchor: middle; fill: #4285f4; }
.line { width: 20px; height: 1px; background: #ddd; margin-top: -2px; }
.addons .plus { width: 14px; height: 14px; margin: 37px 0 239px; }
.addons .expand { width: 8px; height: 12px; margin: 0 2px 0 0; fill: none; stroke: #222; stroke-width: 2; }

/* desktop taskbar */
.taskbar { height: 40px; flex: none; background: #070a10; display: flex; color: #fff; font: 12px "Open Sans", sans-serif; }
.taskbar > span { width: 49px; height: 40px; display: grid; place-items: center; }
.taskbar > span:first-child { width: 48px; }
.taskbar > span:nth-child(2) { width: 50px; padding-right: 2px; }
.taskbar > span svg { width: 24px; height: 24px; }
.taskbar > span .t16 { width: 17px; height: 16px; }
.taskbar > .run { background: linear-gradient(90deg, transparent 1px, #38393e 1px 45px, #1a1b20 45px 46px, #2a2b30 46px); }
.xl { font: bold 10px "Liberation Sans"; text-anchor: middle; fill: #fff; }
.tray { margin-left: auto; display: flex; align-items: center; height: 40px; }
.tray > svg { fill: none; stroke: #fff; height: 12px; }
.tray .up { width: 12px; height: 8px; stroke-width: 1.3; }
.tray .bat { width: 16px; margin-left: 10px; }
.tray .vol { width: 16px; margin-left: 8px; }
.tray .wifi { width: 13px; margin: 3px 0 0 11px; }
.lang { margin-left: 10px; width: 24px; letter-spacing: -.55px; }
.time { width: 64px; margin-left: 7px; display: flex; flex-direction: column; align-items: center; line-height: 18px; letter-spacing: -.4px; }
.note { position: relative; width: 16px; height: 16px; margin-left: 12px; }
.note svg { width: 16px; height: 16px; }
.note b { position: absolute; left: 7px; top: 6px; width: 17px; height: 17px; border-radius: 50%; border: 1px solid #777; background: #333; font-size: 11px; line-height: 15px; text-align: center; }
.desk { width: 1px; height: 40px; background: #555; margin: 0 4px 0 20px; }
```
